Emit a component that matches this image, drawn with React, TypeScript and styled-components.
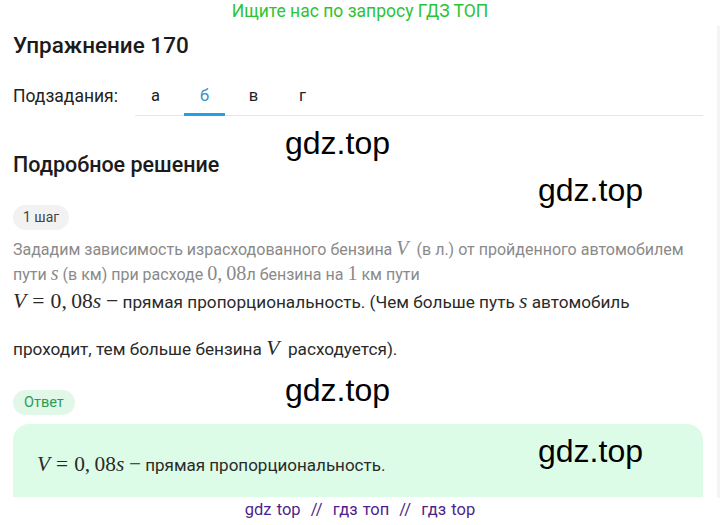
import React from 'react';
import styled, { createGlobalStyle } from 'styled-components';

const GlobalStyle = createGlobalStyle`
  html, body {
    margin: 0;
    padding: 0;
    background: #ffffff;
  }
  body {
    font-family: Roboto, "Noto Sans", Arial, sans-serif;
    color: #222;
  }
`;

const Page = styled.div`
  width: 720px;
  height: 525px;
  overflow: hidden;
  display: flex;
  flex-direction: column;
  position: relative;
`;

const Banner = styled.div`
  height: 24px;
  line-height: 22px;
  text-align: center;
  font-size: 17.5px;
  color: #2bc435;
`;

const Body = styled.div`
  display: flex;
  height: 473px;
`;

const Main = styled.div`
  width: 690px;
  padding-left: 13px;
  overflow: hidden;
`;

const Sidebar = styled.div`
  margin: 2px 0 0 14px;
  width: 3px;
  height: 472px;
  background: #f4f4f4;
`;

const Title = styled.h1`
  margin: 6px 0 0;
  font-size: 22.5px;
  line-height: 30px;
  font-weight: 500;
  color: #1b1b1b;
`;

const TabsRow = styled.div`
  display: flex;
  align-items: stretch;
  margin-top: 18px;
  height: 38px;
`;

const TabsLabel = styled.div`
  width: 122px;
  font-size: 17.5px;
  line-height: 36px;
  color: #222;
`;

const TabList = styled.div`
  flex: 1;
  display: flex;
  gap: 8px;
  border-bottom: 1px solid #e6e6e6;
`;

const Tab = styled.div<{ $active?: boolean }>`
  width: 41px;
  text-align: center;
  font-size: 16.5px;
  line-height: 36px;
  color: ${(p) => (p.$active ? '#3a8fc7' : '#222')};
  border-bottom: 3px solid ${(p) => (p.$active ? '#1fa3e3' : 'transparent')};
  margin-bottom: -1px;
  box-sizing: border-box;
`;

const Subtitle = styled.h2`
  margin: 34px 0 0;
  font-size: 21.5px;
  line-height: 30px;
  font-weight: 500;
  color: #1b1b1b;
`;

const Pill = styled.div<{ $tone: 'gray' | 'green' }>`
  display: inline-block;
  height: 25px;
  line-height: 25px;
  padding: 0 10px;
  border-radius: 13px;
  font-size: 14px;
  background: ${(p) => (p.$tone === 'green' ? '#e1f8e9' : '#f2f2f2')};
  color: ${(p) => (p.$tone === 'green' ? '#2e9b52' : '#444')};
`;

const StepPill = styled(Pill)`
  margin-top: 25px;
`;

const AnswerPill = styled(Pill)`
  margin-top: 17px;
  padding: 0 11px;
  font-size: 14.5px;
`;

const Hint = styled.p`
  margin: 7px 0 0;
  font-size: 16px;
  line-height: 25px;
  color: #8a8a8a;
`;

const Text = styled.p`
  margin: -8px 0 0;
  font-size: 17.2px;
  line-height: 47px;
  color: #2a2a2a;
`;

const Answer = styled.div`
  margin-top: 9px;
  height: 90px;
  padding: 26px 24px 0;
  border-radius: 16px 16px 0 0;
  background: #dcfce7;
  box-sizing: border-box;
  font-size: 17px;
  line-height: 30px;
  color: #2a2a2a;
`;

const M = styled.span`
  font-family: "Liberation Serif", "DejaVu Serif", serif;
  font-size: 1.26em;
  line-height: 1;
  white-space: nowrap;
`;

const I = styled.i`
  font-family: "Liberation Serif", "DejaVu Serif", serif;
`;

const Rel = styled.span`
  margin: 0 0.28em;
`;

const Bin = styled.span`
  margin-left: 0.22em;
`;

const Footer = styled.div`
  height: 26px;
  line-height: 26px;
  text-align: center;
  font-size: 16.5px;
  color: #4e1f8c;
  word-spacing: 1px;
`;

const Watermark = styled.div<{ $x: number; $y: number }>`
  position: absolute;
  left: ${(p) => p.$x}px;
  top: ${(p) => p.$y}px;
  font-family: "Liberation Sans", Arial, sans-serif;
  font-size: 32px;
  line-height: 32px;
  color: #000;
  pointer-events: none;
`;

const Formula: React.FC = () => (
  <M>
    <I>V</I>
    <Rel>=</Rel>0,&thinsp;08<I>s</I>
    <Bin>−</Bin>
  </M>
);

const App: React.FC = () => {
  return (
    <>
      <GlobalStyle />
      <Page>
        <Banner>Ищите нас по запросу ГДЗ ТОП</Banner>
        <Body>
          <Main>
            <Title>Упражнение 170</Title>
            <TabsRow>
              <TabsLabel>Подзадания:</TabsLabel>
              <TabList>
                <Tab>а</Tab>
                <Tab $active>б</Tab>
                <Tab>в</Tab>
                <Tab>г</Tab>
              </TabList>
            </TabsRow>
            <Subtitle>Подробное решение</Subtitle>
            <StepPill $tone="gray">1 шаг</StepPill>
            <Hint>
              Зададим зависимость израсходованного бензина <M><I>V</I></M>&nbsp; (в л.) от пройденного автомобилем
              пути <M><I>s</I></M> (в км) при расходе <M>0,&thinsp;08</M>л бензина на <M>1</M> км пути
            </Hint>
            <Text>
              <Formula /> прямая пропорциональность. (Чем больше путь <M><I>s</I></M> автомобиль
              проходит, тем больше бензина <M><I>V</I></M>&nbsp; расходуется).
            </Text>
            <AnswerPill $tone="green">Ответ</AnswerPill>
            <Answer>
              <Formula /> прямая пропорциональность.
            </Answer>
          </Main>
          <Sidebar />
        </Body>
        <Footer>gdz top &nbsp;//&nbsp; гдз топ &nbsp;//&nbsp; гдз top</Footer>
        <Watermark $x={285} $y={127}>gdz.top</Watermark>
        <Watermark $x={538} $y={174}>gdz.top</Watermark>
        <Watermark $x={285} $y={374}>gdz.top</Watermark>
        <Watermark $x={538} $y={435}>gdz.top</Watermark>
      </Page>
    </>
  );
};

export default App;
